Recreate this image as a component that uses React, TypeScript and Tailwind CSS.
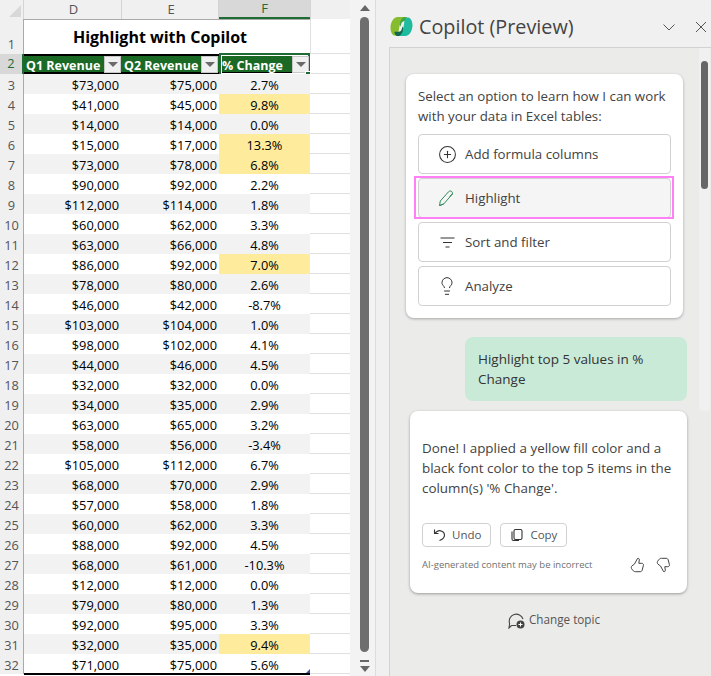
import { CirclePlus, Lightbulb } from "lucide-react"

const rows: [number, string, string, string, boolean?][] = [
  [3, "$73,000", "$75,000", "2.7%"],
  [4, "$41,000", "$45,000", "9.8%", true],
  [5, "$14,000", "$14,000", "0.0%"],
  [6, "$15,000", "$17,000", "13.3%", true],
  [7, "$73,000", "$78,000", "6.8%", true],
  [8, "$90,000", "$92,000", "2.2%"],
  [9, "$112,000", "$114,000", "1.8%"],
  [10, "$60,000", "$62,000", "3.3%"],
  [11, "$63,000", "$66,000", "4.8%"],
  [12, "$86,000", "$92,000", "7.0%", true],
  [13, "$78,000", "$80,000", "2.6%"],
  [14, "$46,000", "$42,000", "-8.7%"],
  [15, "$103,000", "$104,000", "1.0%"],
  [16, "$98,000", "$102,000", "4.1%"],
  [17, "$44,000", "$46,000", "4.5%"],
  [18, "$32,000", "$32,000", "0.0%"],
  [19, "$34,000", "$35,000", "2.9%"],
  [20, "$63,000", "$65,000", "3.2%"],
  [21, "$58,000", "$56,000", "-3.4%"],
  [22, "$105,000", "$112,000", "6.7%"],
  [23, "$68,000", "$70,000", "2.9%"],
  [24, "$57,000", "$58,000", "1.8%"],
  [25, "$60,000", "$62,000", "3.3%"],
  [26, "$88,000", "$92,000", "4.5%"],
  [27, "$68,000", "$61,000", "-10.3%"],
  [28, "$12,000", "$12,000", "0.0%"],
  [29, "$79,000", "$80,000", "1.3%"],
  [30, "$92,000", "$95,000", "3.3%"],
  [31, "$32,000", "$35,000", "9.4%", true],
  [32, "$71,000", "$75,000", "5.6%"],
]

function FilterButton() {
  return (
    <span className="flex h-[17px] w-[17px] shrink-0 items-center justify-center border border-[#c8c8c8] bg-[#f0f0f0]">
      <span className="h-0 w-0 border-x-[5px] border-t-[5px] border-x-transparent border-t-[#6a6a6a]" />
    </span>
  )
}

function Sheet() {
  return (
    <div className="flex h-full w-[350px] shrink-0 flex-col bg-white font-['Open_Sans',sans-serif] text-[12.8px] text-black">
      {/* column letters */}
      <div className="flex h-[19px] shrink-0 bg-[#f0f0f0] text-[13px] text-[#555]">
        <div className="flex w-[24px] items-end justify-end border-r border-[#d4d4d4] p-[2px]">
          <span className="h-0 w-0 border-b-[12px] border-l-[12px] border-b-[#d8d8d8] border-l-transparent" />
        </div>
        <div className="flex w-[98px] items-center justify-center border-r border-[#d4d4d4] pt-[1px] pl-[2px]">D</div>
        <div className="flex w-[97px] items-center justify-center border-r border-[#d4d4d4] pt-[1px] pl-[2px]">E</div>
        <div className="flex w-[91px] items-center justify-center border-b-2 border-[#1e6b34] bg-[#d8d8d8] pt-[1px] text-[#1e6b34]">F</div>
        <div className="flex-1 border-l border-[#d4d4d4]" />
      </div>

      {/* title row */}
      <div className="flex h-[35px] shrink-0">
        <div className="flex w-[24px] items-end justify-center border-r border-[#aaa] bg-[#f0f0f0] text-[#555]">1</div>
        <div className="flex w-[286px] items-center justify-center border-t border-[#aaa] pr-[14px] text-[16px] leading-none font-bold">
          Highlight with Copilot
        </div>
        <div className="flex-1 border-b border-[#e0e0e0] border-l border-[#d4d4d4]" />
      </div>

      {/* header row */}
      <div className="flex h-[20px] shrink-0">
        <div className="flex w-[24px] items-center justify-center border-r-2 border-[#1e6b34] bg-[#d8d8d8] text-[#1e6b34]">2</div>
        <div className="relative flex w-[286px] border-y-2 border-black bg-[#1a6a25] leading-[19px] font-bold text-white">
          <div className="flex w-[98px] items-center justify-between pr-[1px] pl-[2px]">
            <span className="pt-[2px] text-[12.5px] whitespace-nowrap">Q1 Revenue</span>
            <FilterButton />
          </div>
          <div className="flex w-[97px] items-center justify-between pr-[1px] pl-[2px]">
            <span className="pt-[2px] text-[12.5px] whitespace-nowrap">Q2 Revenue</span>
            <FilterButton />
          </div>
          <div className="absolute top-[-3px] right-0 h-[23px] w-[91px] border-2 border-[#1e6b34]">
            <span className="flex h-full items-center justify-between border border-white">
              <span className="pt-[2px] text-[12.5px] whitespace-nowrap">% Change</span>
              <span className="mr-[-2px]">
                <FilterButton />
              </span>
            </span>
            <span className="absolute right-[-3px] bottom-[-3px] h-[6px] w-[6px] border border-white bg-[#1e6b34]" />
          </div>
        </div>
        <div className="flex-1 border-b border-[#e0e0e0]" />
      </div>

      {/* data rows */}
      {rows.map(([n, q1, q2, pct, top]) => {
        const stripe = n % 2 === 1
        return (
          <div key={n} className="flex h-[20px] shrink-0 leading-[22px]">
            <div className="w-[24px] border-r border-[#aaa] bg-[#f0f0f0] text-center text-[#555]">{n}</div>
            <div className={`relative flex w-[286px] ${stripe ? "bg-[#f2f2f2]" : "bg-white"}`}>
              <div className="w-[97px] pr-[2px] text-right">{q1}</div>
              <div className="w-[98px] pr-[2px] text-right">{q2}</div>
              <div className={`w-[91px] text-center ${top ? "bg-[#ffeb9c]" : ""}`}>{pct}</div>
              {n === 32 && (
                <>
                  <span className="absolute right-0 bottom-[-1px] left-0 h-[2px] bg-black" />
                  <span className="absolute right-0 bottom-[1px] h-0 w-0 border-b-[4px] border-l-[4px] border-b-[#3a4fa0] border-l-transparent" />
                </>
              )}
            </div>
            <div className="flex-1 border-b border-[#e0e0e0]" />
          </div>
        )
      })}
    </div>
  )
}

function SheetScrollbar() {
  return (
    <div className="flex h-full w-[26px] shrink-0 flex-col items-center border-r border-[#dcdcdc] bg-[#f3f3f3] pt-[5px] pl-[4px]">
      <span className="h-0 w-0 border-x-[5px] border-b-[6px] border-x-transparent border-b-[#666]" />
      <span className="mt-[6px] h-[635px] w-[9px] shrink-0 rounded-full bg-[#6e6e6e]" />
      <span className="mt-[8px] h-[2px] w-[9px] shrink-0 bg-[#666]" />
      <span className="mt-[4px] h-0 w-0 border-x-[5px] border-t-[6px] border-x-transparent border-t-[#666]" />
    </div>
  )
}

function CopilotLogo() {
  const blob = "M8 2h6.500C12.500 3 11 5 10.500 8L9 17c-.5 3-2 4.500-4 4.500C2.500 21.500.5 17.500.5 13.500.5 8 3.500 2 8 2z"
  return (
    <svg width="23" height="23" viewBox="0 0 24 24" className="shrink-0">
      <path d="M13 2h3c1.500 0 2.500.8 3 2.500l.5 2H15c-2 0-3 1.500-3.500 3.500L11 12l-2-3c.5-3.500 2-7 4-7z" fill="#3fa648" />
      <path d={blob} fill="#86bc2d" />
      <path d="M11 22H8c-1.500 0-2.500-.8-3-2.500l-.5-2H9c2 0 3-1.500 3.500-3.500l.5-2 2 3c-.5 3.500-2 7-4 7z" fill="#12684c" />
      <path d={blob} fill="#1fbb9f" transform="rotate(180 12 12)" />
    </svg>
  )
}

function ThumbIcon({ down }: { down?: boolean }) {
  return (
    <svg width="15" height="16" viewBox="0 0 15 16" fill="none" stroke="#424242" strokeWidth="1" className={down ? "-scale-y-100" : ""}>
      <path d="M4.500 7 7.500 1.500c1-.6 2 .2 1.800 1.500L8.800 6.300h3c1.200 0 1.900 1 1.600 2.100l-1.200 4.700c-.3 1-1 1.600-2 1.600H5.500c-1.300 0-2-.6-2.800-1.500L1.500 11.500C1 10.500 1.300 9.500 2 8.800z" />
    </svg>
  )
}

function OptionButton({ icon, label, active }: { icon: React.ReactNode; label: string; active?: boolean }) {
  return (
    <div className={`relative flex h-[40px] items-center rounded-[4px] border border-[#d1d1d1] ${active ? "bg-[#f5f5f5]" : "bg-white"}`}>
      <span className="ml-[18px] flex w-[20px] shrink-0 justify-center">{icon}</span>
      <span className="ml-[8px] pt-[1px] text-[13.3px] text-[#424242]">{label}</span>
      {active && <span className="absolute top-[-3px] right-[-4px] bottom-[-2px] left-[-5px] border-2 border-[#ff80f4]" />}
    </div>
  )
}

function SmallButton({ icon, label }: { icon: React.ReactNode; label: string }) {
  return (
    <div className="flex h-[24px] items-center gap-[6px] rounded-[4px] border border-[#d1d1d1] bg-white px-[9px] text-[11.5px] text-[#555]">
      {icon}
      <span>{label}</span>
    </div>
  )
}

function Copilot() {
  return (
    <div className="flex h-full min-w-0 flex-1 flex-col bg-[#f0f0f0] font-['Open_Sans',sans-serif]">
      <div className="flex h-[47px] shrink-0 items-center pt-[6px] pl-[14px]">
        <CopilotLogo />
        <span className="ml-[6px] text-[19.8px] text-[#444]">Copilot (Preview)</span>
        <svg width="14" height="14" viewBox="0 0 14 14" className="ml-auto" fill="none" stroke="#555" strokeWidth="1">
          <path d="M1.500 4.500 7 10l5.500-5.500" />
        </svg>
        <svg width="12" height="12" viewBox="0 0 12 12" className="mr-[4px] ml-[19px]" fill="none" stroke="#555" strokeWidth="1">
          <path d="M1 1l10 10M11 1 1 11" />
        </svg>
      </div>

      <div className="ml-[13px] flex min-h-0 flex-1 border-t border-l border-[#d2d2d2] bg-[#ebebe9]">
        <div className="flex min-w-0 flex-1 flex-col pt-[26px]">
          <div className="ml-[16px] w-[277px] rounded-[8px] bg-white px-[12px] pt-[12px] pb-[12px] shadow-[0_1px_3px_rgba(0,0,0,0.3)]">
            <p className="mb-[8px] text-[13.3px] leading-[20px] text-[#424242]">
              Select an option to learn how I can work with your data in Excel tables:
            </p>
            <div className="flex flex-col gap-[4px]">
              <OptionButton label="Add formula columns" icon={<CirclePlus size={19} strokeWidth={1.3} color="#333" />} />
              <OptionButton
                active
                label="Highlight"
                icon={
                  <svg width="18" height="18" viewBox="0 0 18 18" fill="none" stroke="#2e8b57" strokeWidth="1">
                    <path d="M1.500 16.500l.8-4.500 8.200-9.200c.9-1 2.300-1.100 3.200-.3.900.8 1 2.100.2 3.100L5.700 15z" />
                    <path d="M1.500 16.500 5.700 15M11.500 7.500l3.500-3" />
                  </svg>
                }
              />
              <OptionButton
                label="Sort and filter"
                icon={
                  <svg width="17" height="17" viewBox="0 0 17 17" fill="none" stroke="#333" strokeWidth="1.100">
                    <path d="M1.500 4h14M4 8.500h9M6.500 13h4" />
                  </svg>
                }
              />
              <OptionButton label="Analyze" icon={<Lightbulb size={20} strokeWidth={1.2} color="#333" />} />
            </div>
          </div>

          <div className="mt-[19px] mr-[12px] ml-auto w-[222px] rounded-[8px] bg-[#c9ead7] px-[13px] py-[12px] text-[13.5px] leading-[20px] text-[#333]">
            Highlight top 5 values in % Change
          </div>

          <div className="mt-[10px] ml-[20px] w-[277px] rounded-[8px] bg-white px-[12px] pt-[27px] pb-[20px] shadow-[0_1px_3px_rgba(0,0,0,0.35)]">
            <p className="text-[13.4px] leading-[20px] text-[#424242]">
              Done! I applied a yellow fill color and a black font color to the top 5 items in the column(s) '% Change'.
            </p>
            <div className="mt-[25px] flex gap-[9px]">
              <SmallButton
                label="Undo"
                icon={
                  <svg width="14" height="14" viewBox="0 0 14 14" fill="none" stroke="#333" strokeWidth="1.100">
                    <path d="M2.500 1.500v4h4" />
                    <path d="M2.500 5.500 5 3.500c3-2 7.500 0 7.500 3.500 0 2.500-2 4.500-5 5.500" />
                  </svg>
                }
              />
              <SmallButton
                label="Copy"
                icon={
                  <svg width="14" height="14" viewBox="0 0 14 14" fill="none" stroke="#333" strokeWidth="1.100">
                    <rect x="4" y="1.500" width="8" height="10" rx="1.500" />
                    <path d="M2 3.500v7.500c0 1 .8 1.500 1.500 1.500H9" />
                  </svg>
                }
              />
            </div>
            <div className="mt-[10px] flex items-center">
              <span className="text-[9.5px] text-[#707070]">AI-generated content may be incorrect</span>
              <span className="mr-[4px] ml-auto flex gap-[11px]">
                <ThumbIcon />
                <ThumbIcon down />
              </span>
            </div>
          </div>

          <div className="mt-[18px] ml-[117px] flex items-center gap-[4px] text-[11.7px] text-[#555]">
            <svg width="18" height="18" viewBox="0 0 18 18">
              <path d="M9 14.500H4.500L2 17l.6-4.500A7 7 0 1 1 16 8" fill="none" stroke="#444" strokeWidth="1.100" />
              <circle cx="13.500" cy="13.500" r="4" fill="#444" />
              <path d="M13.500 11.500v4M11.500 13.500h4" stroke="#fff" strokeWidth="1" />
            </svg>
            <span>Change topic</span>
          </div>
        </div>

        {/* panel scrollbar */}
        <div className="relative mr-[1px] h-[363px] w-[11px] shrink-0 rounded-b-[4px] bg-[#f0f0f0]">
          <span className="absolute top-[13px] left-[2px] h-[128px] w-[7px] rounded-full bg-[#666]" />
        </div>
      </div>
    </div>
  )
}

export default function App() {
  return (
    <div className="flex h-[676px] w-[711px] overflow-hidden bg-white">
      <Sheet />
      <SheetScrollbar />
      <Copilot />
    </div>
  )
}
